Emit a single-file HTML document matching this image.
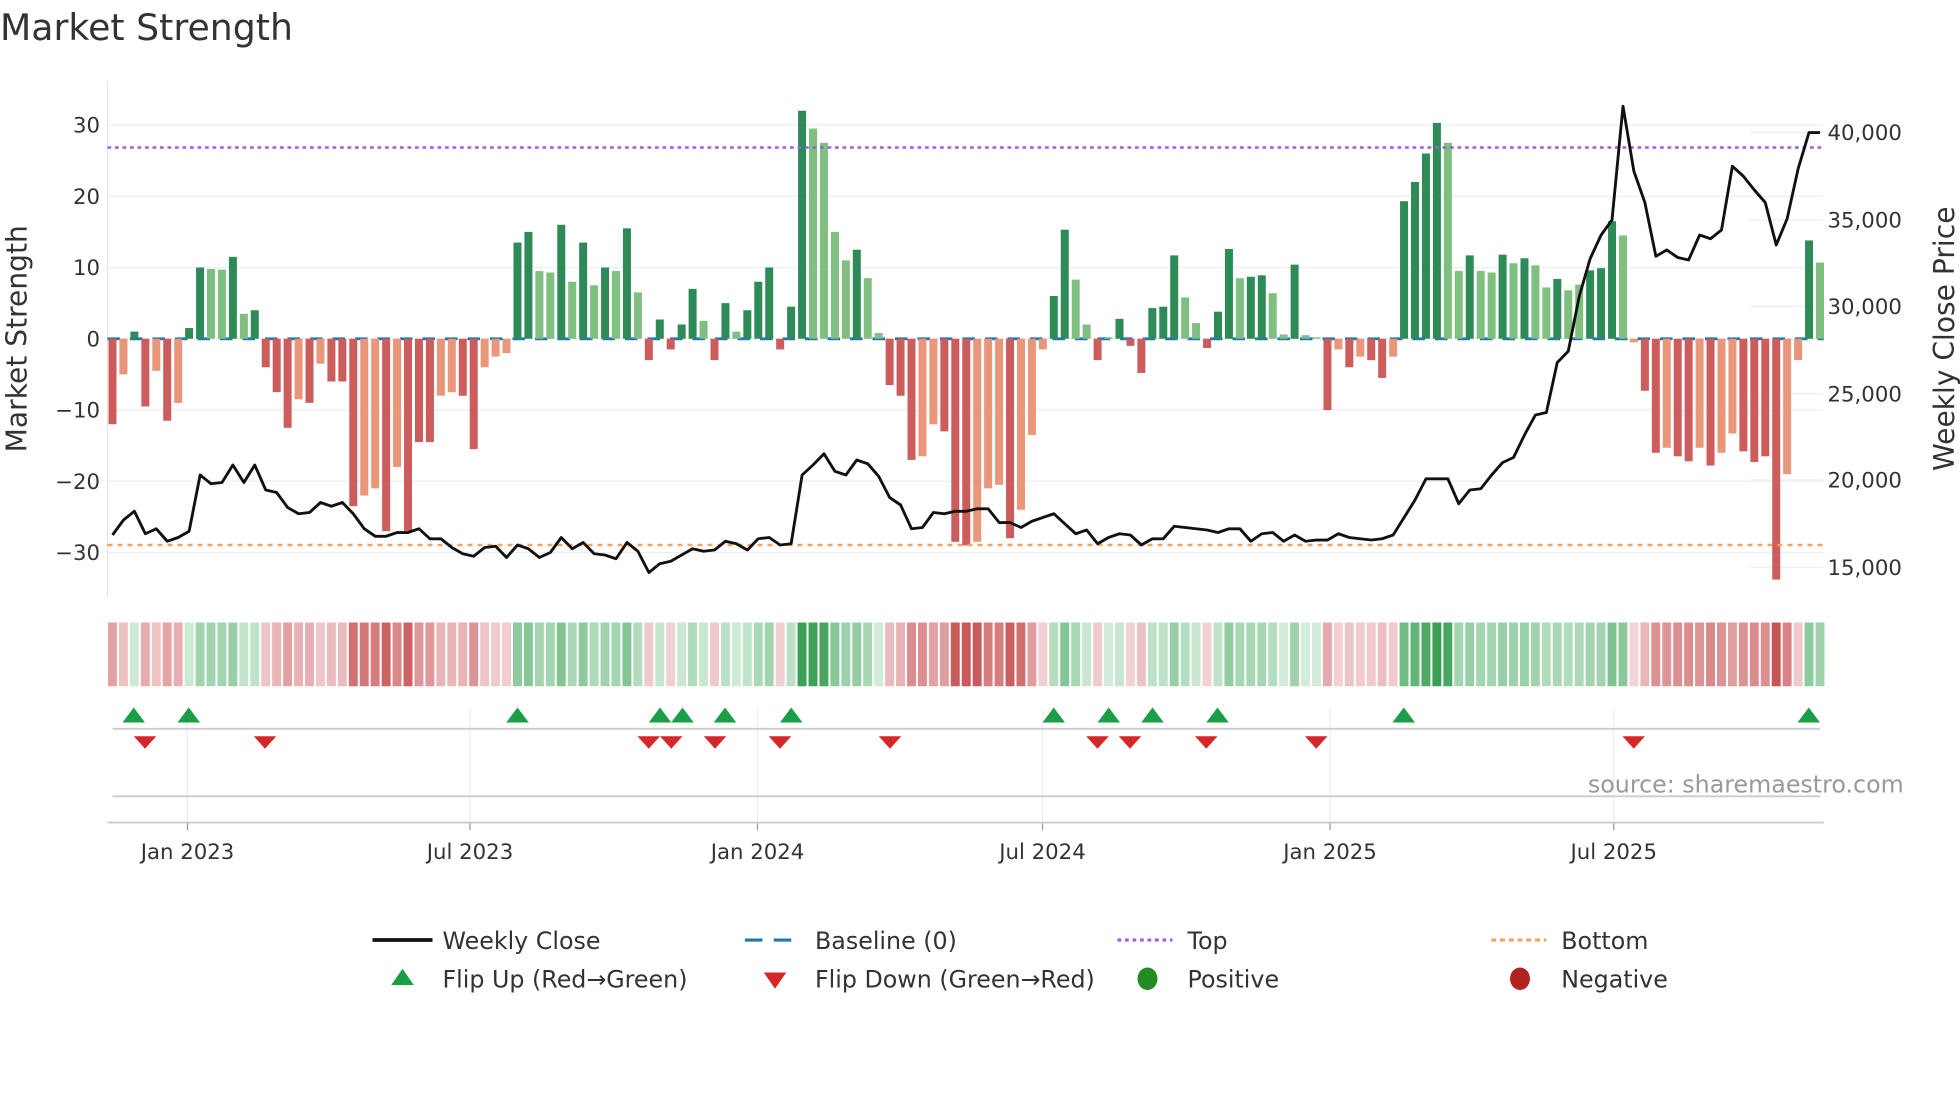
<!DOCTYPE html>
<html><head><meta charset="utf-8"><style>
html,body{margin:0;padding:0;background:#fff;}
svg{display:block;font-family:"DejaVu Sans","Liberation Sans",sans-serif;}
</style></head><body>
<svg id="s" width="1960" height="1102" viewBox="0 0 1568 881.6" xmlns="http://www.w3.org/2000/svg">
<text x="0" y="32" font-size="29" fill="#333">Market Strength</text>
<g id="grid" stroke="#eeeeee" stroke-width="1"></g>
<line x1="86" y1="65" x2="86" y2="478" stroke="#e6e6e6"/>
<g font-size="17" fill="#333" text-anchor="end">
<text x="80" y="106">30</text><text x="80" y="163">20</text><text x="80" y="220">10</text><text x="80" y="277">0</text>
<text x="80" y="334">−10</text><text x="80" y="391">−20</text><text x="80" y="448">−30</text>
</g>
<g font-size="17" fill="#333">
<text x="1462" y="112">40,000</text><text x="1462" y="182">35,000</text><text x="1462" y="251">30,000</text>
<text x="1462" y="321">25,000</text><text x="1462" y="390">20,000</text><text x="1462" y="460">15,000</text>
</g>
<text transform="translate(21,271) rotate(-90)" text-anchor="middle" font-size="22.5" fill="#333">Market Strength</text>
<text transform="translate(1563,271) rotate(-90)" text-anchor="middle" font-size="22.5" fill="#333">Weekly Close Price</text>
<line x1="86" y1="271" x2="1459" y2="271" stroke="#1f77b4" stroke-width="2.3" stroke-dasharray="10,8"/>
<g id="bars"></g>
<line x1="86" y1="118" x2="1459" y2="118" stroke="#9b5fe0" stroke-width="2" stroke-dasharray="3,3"/>
<line x1="86" y1="436" x2="1459" y2="436" stroke="#f4a460" stroke-width="2" stroke-dasharray="4,4"/>
<polyline id="price" fill="none" stroke="#111" stroke-width="2.3" stroke-linejoin="round"/>
<g id="heat"></g>
<g id="vgrid" stroke="#eeeeee"></g>
<line x1="90" y1="583" x2="1456" y2="583" stroke="#cccccc" stroke-width="1.5"/>
<line x1="90" y1="637" x2="1456" y2="637" stroke="#cccccc" stroke-width="1.5"/>
<line x1="86" y1="658" x2="1459" y2="658" stroke="#cccccc" stroke-width="1.5"/>
<g id="marks"></g>
<text x="1523" y="634" text-anchor="end" font-size="19" fill="#999">source: sharemaestro.com</text>
<g font-size="17" fill="#333" text-anchor="middle" id="dates">
<text x="150" y="687">Jan 2023</text><text x="376" y="687">Jul 2023</text><text x="606" y="687">Jan 2024</text>
<text x="834" y="687">Jul 2024</text><text x="1064" y="687">Jan 2025</text><text x="1291" y="687">Jul 2025</text>
</g>
<g font-size="19" fill="#333">
<line x1="298" y1="752" x2="346" y2="752" stroke="#111" stroke-width="3"/>
<text x="354" y="759">Weekly Close</text>
<line x1="596" y1="752" x2="640" y2="752" stroke="#1f77b4" stroke-width="2.5" stroke-dasharray="14,9"/>
<text x="652" y="759">Baseline (0)</text>
<line x1="894" y1="752" x2="938" y2="752" stroke="#9b5fe0" stroke-width="2.5" stroke-dasharray="3,3"/>
<text x="950" y="759">Top</text>
<line x1="1193" y1="752" x2="1237" y2="752" stroke="#f4a460" stroke-width="2.5" stroke-dasharray="4,3"/>
<text x="1249" y="759">Bottom</text>
<polygon points="313,788 331,788 322,775" fill="#1a9e46"/>
<text x="354" y="790">Flip Up (Red→Green)</text>
<polygon points="611,778 629,778 620,791" fill="#d62728"/>
<text x="652" y="790">Flip Down (Green→Red)</text>
<ellipse cx="918" cy="783" rx="8" ry="9" fill="#228b22"/>
<text x="950" y="790">Positive</text>
<ellipse cx="1216" cy="783" rx="8" ry="9" fill="#b22222"/>
<text x="1249" y="790">Negative</text>
</g>
</svg>
<script>
var NS="http://www.w3.org/2000/svg";
function el(t,a,p){var e=document.createElementNS(NS,t);for(var k in a)e.setAttribute(k,a[k]);document.getElementById(p).appendChild(e);return e;}
[100,157,214,271,328,385,442].forEach(function(y){el('line',{x1:86,y1:y,x2:1459,y2:y},'grid');});
[106,176,245,315,384,454].forEach(function(y){el('line',{x1:1400,y1:y,x2:1459,y2:y},'grid');});
var V=[[-12,1],[-5,0],[1,1],[-9.5,1],[-4.5,0],[-11.5,1],[-9,0],[1.5,1],[10,1],[9.8,0],[9.7,0],[11.5,1],[3.5,0],[4,1],[-4,1],[-7.5,1],[-12.5,1],[-8.5,0],[-9,1],[-3.5,0],[-6,1],[-6,1],[-23.5,1],[-22,0],[-21,0],[-27,1],[-18,0],[-27,1],[-14.5,1],[-14.5,1],[-8,0],[-7.5,0],[-8,1],[-15.5,1],[-4,0],[-2.5,0],[-2,0],[13.5,1],[15,1],[9.5,0],[9.3,0],[16,1],[8,0],[13.5,1],[7.5,0],[10,1],[9.5,0],[15.5,1],[6.5,0],[-3,1],[2.7,1],[-1.5,1],[2,1],[7,1],[2.5,0],[-3,1],[5,1],[1,0],[4,1],[8,1],[10,1],[-1.5,1],[4.5,1],[32,1],[29.5,0],[27.5,0],[15,0],[11,0],[12.5,1],[8.5,0],[0.8,0],[-6.5,1],[-8,1],[-17,1],[-16.5,0],[-12,0],[-13,1],[-28.5,1],[-29,1],[-28.5,0],[-21,0],[-20.5,0],[-28,1],[-24,0],[-13.5,0],[-1.5,0],[6,1],[15.3,1],[8.3,0],[2,0],[-3,1],[0.2,0],[2.8,1],[-1,1],[-4.8,1],[4.3,1],[4.5,1],[11.7,1],[5.8,0],[2.2,0],[-1.3,1],[3.8,1],[12.6,1],[8.5,0],[8.7,1],[8.9,1],[6.4,0],[0.6,0],[10.4,1],[0.5,0],[0.2,0],[-10,1],[-1.5,0],[-4,1],[-2.5,0],[-3,1],[-5.5,1],[-2.5,0],[19.3,1],[22,1],[26,1],[30.3,1],[27.5,0],[9.5,0],[11.7,1],[9.5,0],[9.3,0],[11.8,1],[10.6,0],[11.3,1],[10.3,0],[7.2,0],[8.4,1],[6.8,0],[7.6,0],[9.6,1],[9.9,1],[16.5,1],[14.5,0],[-0.5,0],[-7.3,1],[-16,1],[-15.3,0],[-16.5,1],[-17.2,1],[-15.3,0],[-17.8,1],[-16,0],[-13.3,0],[-15.8,1],[-17.3,1],[-16.5,1],[-33.8,1],[-19,0],[-3,0],[13.8,1],[10.7,0]];
var P=[428,416,409,427,423,433,430,425,380,387,386,372,386,372,392,394,406,411,410,402,405,402,411,423,429,429,426,426,423,431,431,438,443,445,438,437,446,436,439,446,442,430,439,434,443,444,447,434,441,458,451,449,444,439,441,440,433,435,440,431,430,436,435,380,372,363,377,380,368,371,381,398,404,423,422,410,411,409,409,407,407,418,418,422,417,414,411,419,427,424,435,430,427,428,436,431,431,421,422,423,424,426,423,423,433,427,426,433,428,433,432,432,427,430,431,432,431,428,414,400,383,383,383,403,392,391,380,370,366,348,332,330,290,281,237,207,188,176,85,137,162,205,200,206,208,188,191,184,133,141,152,162,196,175,135,106,106];
var n=V.length, x0=90, x1=1456, dx=(x1-x0)/(n-1);
var pts=[];
for(var i=0;i<n;i++){
  var x=x0+dx*i, v=V[i][0], d=V[i][1];
  var h=Math.abs(v)*5.7, y=v>=0?271-h:271;
  var c=v>=0?(d?'#2e8b57':'#7fbf7f'):(d?'#cd5c5c':'#e9967a');
  el('rect',{x:x-3.2,y:y,width:6.4,height:Math.max(h,0.8),fill:c},'bars');
  var t=Math.min(Math.abs(v)/30,1);
  var a,b;
  if(v>=0){a=[212,237,218];b=[58,160,85];}else{a=[244,214,216];b=[200,85,85];}
  var col='rgb('+Math.round(a[0]+(b[0]-a[0])*t)+','+Math.round(a[1]+(b[1]-a[1])*t)+','+Math.round(a[2]+(b[2]-a[2])*t)+')';
  el('rect',{x:x-4.4+0.8,y:498,width:dx-1.6,height:51,fill:col},'heat');
  if(i<P.length)pts.push(x.toFixed(1)+','+P[i]);
}
document.getElementById('price').setAttribute('points',pts.join(' '));
[150,376,606,834,1064,1291].forEach(function(x){el('line',{x1:x,y1:567,x2:x,y2:658},'vgrid');el('line',{x1:x,y1:658,x2:x,y2:664,stroke:'#999'},'vgrid');});
[107,151,414,528,546,580,633,843,887,922,974,1123,1447].forEach(function(x){el('polygon',{points:(x-9)+',578 '+(x+9)+',578 '+x+',566',fill:'#1a9e46'},'marks');});
[116,212,519,537,572,624,712,878,904,965,1053,1307].forEach(function(x){el('polygon',{points:(x-9)+',589 '+(x+9)+',589 '+x+',599',fill:'#d62728'},'marks');});
</script>
</body></html>
